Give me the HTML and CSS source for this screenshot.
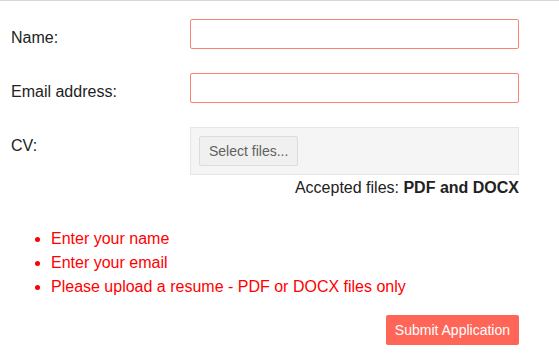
FILE: index.html
```html
<!DOCTYPE html>
<html lang="en">
<head>
    <meta charset="UTF-8">
    <meta name="viewport" content="width=device-width, initial-scale=1.0">
    <title>Job Application</title>
    <link rel="stylesheet" href="styles.css">
</head>
<body>
    <form class="application">
        <div class="row">
            <label for="name">Name:</label>
            <input type="text" id="name" class="field">
        </div>
        <div class="row">
            <label for="email">Email address:</label>
            <input type="email" id="email" class="field">
        </div>
        <div class="row row-cv">
            <label>CV:</label>
            <div class="upload">
                <button type="button" class="select-btn">Select files...</button>
            </div>
        </div>
        <div class="accepted">Accepted files: <strong>PDF and DOCX</strong></div>

        <ul class="errors">
            <li>Enter your name</li>
            <li>Enter your email</li>
            <li>Please upload a resume - PDF or DOCX files only</li>
        </ul>

        <div class="actions">
            <button type="submit" class="submit-btn">Submit Application</button>
        </div>
    </form>
</body>
</html>
```

FILE: styles.css
```css
* {
    box-sizing: border-box;
}

body {
    margin: 0;
    font-family: "Liberation Sans", Arial, sans-serif;
    font-size: 16px;
    color: #222;
    background: #fff;
}

.application {
    border-top: 1px solid #d6d6d6;
    padding: 18px 0 0 11px;
}

.row {
    display: grid;
    grid-template-columns: 179px 329px;
    margin-bottom: 24px;
}

.row label {
    padding-top: 10px;
}

.row-cv {
    margin-bottom: 0;
}

.field {
    height: 30px;
    border: 1px solid #fa8474;
    border-radius: 2px;
    font: inherit;
    outline: none;
}

.upload {
    background: #f5f5f5;
    border: 1px solid #e6e6e6;
    padding: 8px;
}

.select-btn {
    height: 30px;
    padding: 0 9px;
    border: 1px solid #dcdcdc;
    border-radius: 2px;
    background: #f0f0f0;
    color: #616161;
    font-family: inherit;
    font-size: 14px;
}

.accepted {
    width: 508px;
    margin-top: 4px;
    text-align: right;
}

.errors {
    margin: 30px 0 0;
    padding-left: 40px;
    color: #ff0000;
    line-height: 24px;
}

.actions {
    width: 508px;
    margin-top: 16px;
    display: flex;
    justify-content: flex-end;
}

.submit-btn {
    height: 30px;
    padding: 0 9px;
    border: none;
    border-radius: 2px;
    background: #ff6657;
    color: #fff;
    font-family: inherit;
    font-size: 14px;
}
```
